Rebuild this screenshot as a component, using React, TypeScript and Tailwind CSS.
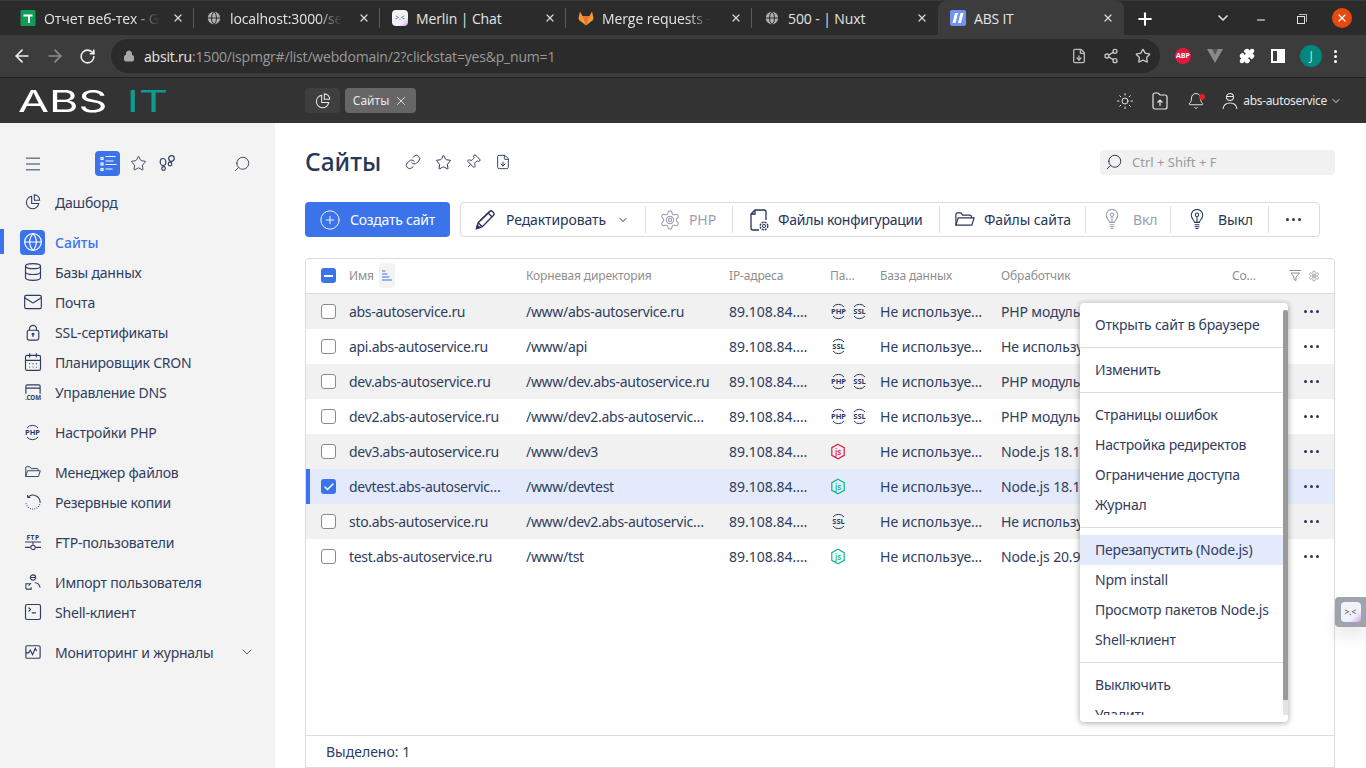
import type { ReactNode } from "react";
import {
  ArrowLeft,
  ArrowRight,
  RotateCw,
  Lock,
  Share2,
  Star,
  Puzzle,
  Plus,
  X,
  ChevronDown,
  Minus,
  Sun,
  Bell,
  Search,
  Menu,
  Globe,
  Database,
  Mail,
  CalendarDays,
  SquareTerminal,
  Link,
  Pin,
  FileDown,
  Check,
  CirclePlus,
} from "lucide-react";

const UI = "font-['Noto_Sans',sans-serif]";
const GEAR =
  "M12.22 2h-.44a2 2 0 0 0-2 2v.18a2 2 0 0 1-1 1.73l-.43.25a2 2 0 0 1-2 0l-.15-.08a2 2 0 0 0-2.73.73l-.22.38a2 2 0 0 0 .73 2.73l.15.1a2 2 0 0 1 1 1.72v.51a2 2 0 0 1-1 1.74l-.15.09a2 2 0 0 0-.73 2.73l.22.38a2 2 0 0 0 2.73.73l.15-.08a2 2 0 0 1 2 0l.43.25a2 2 0 0 1 1 1.73V20a2 2 0 0 0 2 2h.44a2 2 0 0 0 2-2v-.18a2 2 0 0 1 1-1.73l.43-.25a2 2 0 0 1 2 0l.15.08a2 2 0 0 0 2.73-.73l.22-.39a2 2 0 0 0-.73-2.73l-.15-.08a2 2 0 0 1-1-1.74v-.5a2 2 0 0 1 1-1.74l.15-.09a2 2 0 0 0 .73-2.73l-.22-.38a2 2 0 0 0-2.73-.73l-.15.08a2 2 0 0 1-2 0l-.43-.25a2 2 0 0 1-1-1.73V4a2 2 0 0 0-2-2z";

function Pie({ size = 16 }: { size?: number }) {
  return (
    <svg width={size} height={size} viewBox="0 0 18 18" fill="none" stroke="currentColor" strokeWidth="1.2" className="shrink-0">
      <path d="M7.500 2.600a7 7 0 1 0 8 8h-8z" />
      <path d="M10.500 1v6h6a6 6 0 0 0-6-6z" />
    </svg>
  );
}

function Gear({ size = 20, sw = 1.2 }: { size?: number; sw?: number }) {
  return (
    <svg width={size} height={size} viewBox="0 0 24 24" fill="none" stroke="currentColor" strokeWidth={sw} className="shrink-0">
      <path d={GEAR} />
      <circle cx="12" cy="12" r="4" />
      <circle cx="12" cy="12" r="1.800" />
    </svg>
  );
}

function Badge({ label, color = "#2a3a5e" }: { label: string; color?: string }) {
  return (
    <svg width="17" height="17" viewBox="0 0 17 17" fill="none" stroke={color} strokeWidth="1" className="shrink-0">
      <path d="M3 4a7 7 0 0 1 11 0" />
      <path d="M3 13a7 7 0 0 0 11 0" />
      <text x="8.500" y="11" textAnchor="middle" fontSize="7.500" fontWeight="700" fill={color} stroke="none" fontFamily="Noto Sans, sans-serif">
        {label}
      </text>
    </svg>
  );
}

function NodeBadge({ color }: { color: string }) {
  return (
    <svg width="16" height="17" viewBox="0 0 16 17" fill="none" stroke={color} strokeWidth="1.200">
      <path d="M8 1.200l6.200 3.500v7.600L8 15.800l-6.200-3.500V4.700z" />
      <text x="8" y="11.500" textAnchor="middle" fontSize="8" fontWeight="600" fill={color} stroke="none" fontFamily="Noto Sans, sans-serif">
        js
      </text>
    </svg>
  );
}

function MerlinIcon({ size = 16 }: { size?: number }) {
  return (
    <div
      className="flex items-center justify-center rounded-sm bg-gradient-to-br from-[#f4f3f8] via-[#f1eff8] via-70% to-[#cf9df2] text-[#444] leading-none"
      style={{ width: size, height: size, fontSize: size * 0.42 }}
    >
      &gt;.&lt;
    </div>
  );
}

const navIcon = "w-5 h-5 stroke-[1.4] shrink-0";

function SslLock() {
  return (
    <svg width="16" height="17" viewBox="0 0 18 19" fill="none" stroke="currentColor" strokeWidth="1.300" className="shrink-0">
      <rect x="2.500" y="7" width="13" height="11" rx="2" />
      <path d="M5 7V5.500a4 4 0 0 1 8 0V7" />
      <circle cx="9" cy="11.500" r="1" />
      <path d="M9 12.500v2" />
    </svg>
  );
}

function DnsIcon() {
  return (
    <svg width="16" height="17" viewBox="0 0 18 19" fill="none" stroke="currentColor" strokeWidth="1.300" className="shrink-0">
      <path d="M1 11V2.500A1.500 1.500 0 0 1 2.500 1h13A1.500 1.500 0 0 1 17 2.500V11M1 4.500h16" />
      <text x="9" y="18.500" textAnchor="middle" fontSize="7" fontWeight="700" fill="currentColor" stroke="none" fontFamily="Noto Sans, sans-serif">
        .COM
      </text>
    </svg>
  );
}

function BackupIcon() {
  return (
    <svg width="16" height="16" viewBox="0 0 18 18" fill="none" stroke="currentColor" strokeWidth="1.200" className="shrink-0">
      <path d="M3.500 3.500A8 8 0 0 1 17 9" />
      <path d="M17 9a8 8 0 0 1-16 0" strokeDasharray="1 1.500" />
      <path d="M3 1v3h3" />
    </svg>
  );
}

function FtpIcon() {
  return (
    <svg width="16" height="17" viewBox="0 0 18 19" fill="none" stroke="currentColor" strokeWidth="1.200" className="shrink-0">
      <text x="9" y="6.500" textAnchor="middle" fontSize="7.500" fontWeight="700" letterSpacing="0.500" fill="currentColor" stroke="none" fontFamily="Noto Sans, sans-serif">
        FTP
      </text>
      <path d="M0 9h18M0 15h6M12 15h6M9 9v3" />
      <circle cx="9" cy="15" r="2.500" />
    </svg>
  );
}

function ImportIcon() {
  return (
    <svg width="16" height="16" viewBox="0 0 18 18" fill="none" stroke="currentColor" strokeWidth="1.200" className="shrink-0">
      <circle cx="9" cy="4" r="3" />
      <path d="M6.500 4h5M11 9.500c3 .5 5.500 2.500 6 6" />
      <path d="M1 17v-6h5l-2 2M1 17h6v-2" />
    </svg>
  );
}

function MonitorIcon() {
  return (
    <svg width="16" height="16" viewBox="0 0 18 18" fill="none" stroke="currentColor" strokeWidth="1.300" className="shrink-0">
      <rect x="1" y="2" width="16" height="14" rx="1.500" />
      <path d="M1 10h3l2-3 2.500 5 3-7 1.500 3" />
    </svg>
  );
}

function OpenFolder({ width = 16 }: { width?: number }) {
  return (
    <svg width={width} viewBox="0 0 22 16" fill="none" stroke="currentColor" strokeWidth="1.300" className="shrink-0">
      <path d="M1 14.500V2.500A1.500 1.500 0 0 1 2.500 1h4l2 2.500h8A1.500 1.500 0 0 1 18 5v1.500" />
      <path d="M1 14.500l2.500-8H21l-2.500 8z" />
    </svg>
  );
}

function ConfigIcon() {
  return (
    <svg width="22" height="22" viewBox="0 0 22 22" fill="none" stroke="currentColor" strokeWidth="1.300" className="shrink-0">
      <path d="M11 21H5a2 2 0 0 1-2-2V5l4-4h9a2 2 0 0 1 2 2v8M3 5h4V1" />
      <circle cx="16" cy="17" r="1.600" strokeWidth="1" />
      <circle cx="16" cy="17" r="3.800" strokeDasharray="2 1" strokeWidth="1.400" />
    </svg>
  );
}

function PencilIcon() {
  return (
    <svg width="21" height="21" viewBox="0 0 20 20" fill="none" stroke="currentColor" strokeWidth="1.300" className="shrink-0">
      <path d="M1.500 18.500l1.500-5.500L14 2.300a1.800 1.800 0 0 1 2.500 0l1.200 1.200a1.800 1.800 0 0 1 0 2.500L7 16.800z" />
      <path d="M3 13l4 3.800M12.500 3.800l3.800 3.800M5 11l9.500-9" />
      <path d="M1.500 18.500l.8-3 2.200 2.200z" fill="currentColor" />
    </svg>
  );
}

function Bulb() {
  return (
    <svg width="16" height="21" viewBox="0 0 16 22" fill="none" stroke="currentColor" strokeWidth="1.100" className="shrink-0">
      <path d="M5.500 14c0-2-3.500-3.500-3.500-7.500a6 6 0 0 1 12 0c0 4-3.500 5.500-3.500 7.500z" />
      <circle cx="8" cy="6" r="1.800" />
      <path d="M8 8v6M5.500 16.500h5M5.500 18.500h5M6.500 20.500h3" />
    </svg>
  );
}

function Footsteps() {
  return (
    <svg width="17" height="17" viewBox="0 0 17 17" fill="none" stroke="currentColor" strokeWidth="1.200" className="shrink-0">
      <ellipse cx="4" cy="7" rx="2.800" ry="3.500" />
      <circle cx="4.500" cy="13.500" r="1.800" />
      <ellipse cx="12.500" cy="3.500" rx="2.800" ry="2.800" />
      <circle cx="11" cy="9" r="1.800" />
    </svg>
  );
}

function ListActive() {
  return (
    <svg width="18" height="18" viewBox="0 0 18 18" fill="none" stroke="white" strokeWidth="1.100">
      <rect x="2" y="2.500" width="2" height="2" />
      <rect x="2" y="8" width="2" height="2" />
      <rect x="2" y="13.500" width="2" height="2" />
      <path d="M6.500 1.500h10M6.500 6h8M6.500 9.500h11M6.500 14h7" />
    </svg>
  );
}

const TABS = [
  { title: "Отчет веб-тех - G", icon: "sheet", fade: true },
  { title: "localhost:3000/se", icon: "globe", fade: true },
  { title: "Merlin | Chat", icon: "merlin" },
  { title: "Merge requests -", icon: "gitlab", fade: true },
  { title: "500 - | Nuxt", icon: "globe" },
];

function TabIcon({ kind }: { kind: string }) {
  if (kind === "sheet")
    return (
      <svg width="16" height="16" viewBox="0 0 16 16">
        <rect x="0.500" width="15" height="16" rx="1.500" fill="#0f9d58" />
        <path d="M3.500 4.500h9v2h-2.500V13H8V6.500H3.500z" fill="white" />
      </svg>
    );
  if (kind === "globe") return <Globe className="w-4 h-4 text-[#2c2c2c] fill-[#aeb0b3] stroke-[1.5]" />;
  if (kind === "merlin") return <MerlinIcon />;
  return (
    <svg width="16" height="16" viewBox="0 0 16 16">
      <path d="M8 15.500L1 10 .500 8l1.500-6.500L4.500 6h7L14 1.500 15.500 8 15 10z" fill="#f09b36" />
      <path d="M8 15.500L4.500 6h7z" fill="#e8732c" />
    </svg>
  );
}

function BrowserChrome() {
  return (
    <div className="font-['Open_Sans',sans-serif]">
      <div className="h-[35px] bg-[#2b2b2b] border-t border-[#3a3a3a] flex items-end pl-2 relative">
        {TABS.map((t, i) => (
          <div key={i} className="w-[186px] h-[34px] flex items-center pl-3 pr-2 relative">
            <div className="shrink-0 w-4 h-4"><TabIcon kind={t.icon} /></div>
            <div className="ml-2 flex-1 whitespace-nowrap text-[14px] text-[#e4e4e4] tracking-[-0.1px]">
              <span className={`inline-block ${t.fade ? "[mask-image:linear-gradient(to_right,black_78%,transparent)]" : ""}`}>{t.title}</span>
            </div>
            <X className="w-3 h-3 text-[#d8d8d8] stroke-[2.5] ml-2 mr-0.5 shrink-0" />
            {i < 4 && <div className="absolute right-0 top-[7px] h-[20px] w-px bg-[#5a5a5a]" />}
          </div>
        ))}
        <div className="w-[186px] h-[34px] bg-[#3c3c3c] rounded-t-lg flex items-center pl-3 pr-2">
          <svg width="16" height="16" viewBox="0 0 16 16">
            <rect width="16" height="16" rx="2" fill="#6d94f5" />
            <path d="M5 3h3L5.500 13h-3zM10.500 3h3L11 13H8z" fill="white" />
          </svg>
          <div className="ml-2 flex-1 text-[14px] text-[#e8e8e8] tracking-[-0.2px]">ABS IT</div>
          <X className="w-3 h-3 text-[#d8d8d8] stroke-[2.5] mr-0.5" />
        </div>
        <Plus className="w-5 h-5 text-white stroke-[2.5] ml-[11px] mb-[6px]" />
        <div className="flex-1" />
        <ChevronDown className="w-4 h-4 text-[#e0e0e0] stroke-[2.5] mb-[9px] mr-[24px]" />
        <Minus className="w-3 h-3 text-white mb-[9px] mr-[30px]" />
        <div className="relative w-2 h-2 border border-[#e0e0e0] mb-[11px] mr-[27px]">
          <div className="absolute -top-[3px] -right-[3px] w-2 h-2 border-t border-r border-[#b8b8b8]" />
        </div>
        <div className="w-[20px] h-[20px] rounded-full bg-[#e8490f] text-white flex items-center justify-center mb-[7px] mr-[14px]">
          <X className="w-3 h-3 stroke-[2.5]" />
        </div>
      </div>
      <div className="h-[43px] bg-[#3c3c3c] border-b border-[#222] flex items-center pl-[12px] pr-[14px]">
        <ArrowLeft className="w-[20px] h-[20px] text-[#f0f0f0] stroke-[2]" />
        <ArrowRight className="w-[20px] h-[20px] text-[#8b8b8b] stroke-[2] ml-[13px]" />
        <RotateCw className="w-[17px] h-[17px] text-[#f0f0f0] stroke-[2.2] ml-[14px]" />
        <div className="ml-[15px] w-[1049px] h-[34px] rounded-full bg-[#2b2b2b] flex items-center pl-[12px] pr-[9px]">
          <Lock className="w-[12px] h-[12px] text-[#a8a8a8] fill-[#a8a8a8]" />
          <div className="ml-[9px] flex-1 text-[14px] tracking-[-0.19px] whitespace-nowrap pt-[1px]">
            <span className="text-[#e8e8e8]">absit.ru</span>
            <span className="text-[#9a9a9a]">:1500/ispmgr#/list/webdomain/2?clickstat=yes&amp;p_num=1</span>
          </div>
          <FileDown className="w-4 h-4 text-[#bbb]" />
          <Share2 className="w-4 h-4 text-[#c8c8c8] ml-[16px]" />
          <Star className="w-4 h-4 text-[#c8c8c8] ml-[16px]" />
        </div>
        <div className="ml-[15px] w-4 h-4 rounded-full bg-[#e6173e] text-white text-[7px] font-bold flex items-center justify-center">ABP</div>
        <svg width="16" height="16" viewBox="0 0 16 16" className="ml-[16px]"><path d="M0 1h16L8 15z" fill="#8a8a8a" /><path d="M5 1h6L8 7z" fill="#555" /></svg>
        <Puzzle className="w-4 h-4 text-white fill-white ml-[16px]" />
        <div className="ml-[16px] w-[14px] h-[14px] border-2 border-white bg-[#3c3c3c] flex justify-end"><div className="w-[6px] bg-white" /></div>
        <div className="ml-[15px] w-[22px] h-[22px] rounded-full bg-[#00897b] text-[#d8d8d8] text-[12px] flex items-center justify-center">J</div>
        <div className="ml-[12px] flex flex-col gap-[2px]">
          <div className="w-[3px] h-[3px] rounded-full bg-white" />
          <div className="w-[3px] h-[3px] rounded-full bg-white" />
          <div className="w-[3px] h-[3px] rounded-full bg-white" />
        </div>
      </div>
    </div>
  );
}

function AppHeader() {
  return (
    <div className={`h-[45px] bg-[#333333] flex items-center pl-[18px] pr-[24px] ${UI}`}>
      <div className="w-[287px] text-[30px] leading-none font-['Inter'] font-normal whitespace-nowrap scale-x-[1.5] origin-left">
        <span className="text-white">ABS</span>
        <span className="text-[#0d9c94] ml-[13px]">IT</span>
      </div>
      <div className="w-[35px] h-[25px] rounded bg-[#3f3f3f] flex items-center justify-center text-[#e6e6e6]"><Pie size={16} /></div>
      <div className="ml-[5px] h-[25px] w-[71px] rounded bg-[#666666] flex items-center justify-center gap-[5px] text-[12px] text-[#e8e8e8]">
        Сайты <X className="w-[14px] h-[14px] stroke-[1.5]" />
      </div>
      <div className="flex-1" />
      <Sun className="w-[18px] h-[18px] text-[#e6e6e6] stroke-[1.3]" />
      <svg width="16" height="18" viewBox="0 0 16 18" fill="none" stroke="#e6e6e6" strokeWidth="1.200" className="ml-[18px]">
        <path d="M1 3a2 2 0 0 1 2-2h3l2 2h5a2 2 0 0 1 2 2v10a2 2 0 0 1-2 2H3a2 2 0 0 1-2-2z" />
        <path d="M8 14V8M5.500 10.500L8 8l2.500 2.500" />
      </svg>
      <div className="ml-[19px] relative">
        <Bell className="w-[18px] h-[18px] text-[#e6e6e6] stroke-[1.3]" />
        <div className="absolute right-0 top-[2px] w-[6px] h-[6px] rounded-full bg-[#ea1c24]" />
      </div>
      <svg width="16" height="18" viewBox="0 0 16 18" fill="none" stroke="#e6e6e6" strokeWidth="1.100" className="ml-[17px]">
        <circle cx="8" cy="5" r="3.500" />
        <path d="M4.800 4.500h6.400M1 17c.5-3.500 3-6 7-6s6.500 2.500 7 6" />
      </svg>
      <div className="ml-[5px] text-[12px] text-[#e8e8e8] tracking-[-0.33px]">abs-autoservice</div>
      <ChevronDown className="w-3 h-3 text-[#e6e6e6] ml-[3px]" />
    </div>
  );
}

type NavItem = { label: string; icon: ReactNode; gap?: boolean; active?: boolean; chevron?: boolean };

const NAV: NavItem[] = [
  { label: "Дашборд", icon: <Pie /> },
  { label: "Сайты", icon: <Globe className={navIcon} />, gap: true, active: true },
  { label: "Базы данных", icon: <Database className={navIcon} /> },
  { label: "Почта", icon: <Mail className={navIcon} /> },
  { label: "SSL-сертификаты", icon: <SslLock /> },
  { label: "Планировщик CRON", icon: <CalendarDays className={navIcon} /> },
  { label: "Управление DNS", icon: <DnsIcon /> },
  { label: "Настройки PHP", icon: <Badge label="PHP" />, gap: true },
  { label: "Менеджер файлов", icon: <OpenFolder />, gap: true },
  { label: "Резервные копии", icon: <BackupIcon /> },
  { label: "FTP-пользователи", icon: <FtpIcon />, gap: true },
  { label: "Импорт пользователя", icon: <ImportIcon />, gap: true },
  { label: "Shell-клиент", icon: <SquareTerminal className={navIcon} /> },
  { label: "Мониторинг и журналы", icon: <MonitorIcon />, gap: true, chevron: true },
];

function Sidebar() {
  return (
    <div className="w-[275px] shrink-0 bg-[#f3f3f4] pt-[28px] text-[#2f3d60] text-[14px]">
      <div className="h-[25px] flex items-center pl-[25px] pr-[24px]">
        <Menu className="w-5 h-5 -ml-[2px] stroke-[1.2]" />
        <div className="ml-[52px] w-[25px] h-[25px] rounded bg-[#3b73ea] flex items-center justify-center"><ListActive /></div>
        <Star className="ml-[10px] w-[17px] h-[17px] stroke-[1.3]" />
        <div className="ml-[12px]"><Footsteps /></div>
        <div className="flex-1" />
        <Search className="w-[18px] h-[18px] stroke-[1.2] -scale-x-100" />
      </div>
      <div className="mt-[11px]">
        {NAV.map((n) => (
          <div key={n.label} className={`relative h-[30px] flex items-center pl-[25px] pr-[20px] ${n.gap ? "mt-[10px]" : ""}`}>
            {n.active && <div className="absolute left-0 top-[2px] w-1 h-[25px] bg-[#3b73ea]" />}
            {n.active ? (
              <div className="-ml-[5px] -mr-[5px] w-[25px] h-[25px] rounded bg-[#3b73ea] flex items-center justify-center text-white shrink-0">{n.icon}</div>
            ) : (
              <div className="w-[15px] h-[18px] flex items-center justify-center shrink-0">{n.icon}</div>
            )}
            <div className={`ml-[15px] flex-1 whitespace-nowrap ${n.active ? "text-[#3b73ea] font-medium" : "tracking-[-0.2px]"}`}>{n.label}</div>
            {n.chevron && <ChevronDown className="w-4 h-4 stroke-[1.2]" />}
          </div>
        ))}
      </div>
    </div>
  );
}

function ToolbarBtn({ icon, label, disabled, chevron, className = "" }: { icon: ReactNode; label?: string; disabled?: boolean; chevron?: boolean; className?: string }) {
  return (
    <div className={`h-[27px] flex items-center border-r border-[#dcdcdc] last:border-r-0 whitespace-nowrap ${disabled ? "text-[#9aa1b2]" : "text-[#27365a]"} ${className}`}>
      {icon}
      {label && <span>{label}</span>}
      {chevron && <ChevronDown className="w-3 h-3 ml-[1px]" />}
    </div>
  );
}

type Row = { name: string; root: string; badges: ReactNode; handler: string; selected?: boolean };

const php = <Badge label="PHP" />;
const ssl = <Badge label="SSL" />;

const ROWS: Row[] = [
  { name: "abs-autoservice.ru", root: "/www/abs-autoservice.ru", badges: <>{php}{ssl}</>, handler: "PHP модуль" },
  { name: "api.abs-autoservice.ru", root: "/www/api", badges: ssl, handler: "Не используется" },
  { name: "dev.abs-autoservice.ru", root: "/www/dev.abs-autoservice.ru", badges: <>{php}{ssl}</>, handler: "PHP модуль" },
  { name: "dev2.abs-autoservice.ru", root: "/www/dev2.abs-autoservice.ru", badges: <>{php}{ssl}</>, handler: "PHP модуль" },
  { name: "dev3.abs-autoservice.ru", root: "/www/dev3", badges: <NodeBadge color="#e11d3c" />, handler: "Node.js 18.16" },
  { name: "devtest.abs-autoservice.ru", root: "/www/devtest", badges: <NodeBadge color="#10b981" />, handler: "Node.js 18.16", selected: true },
  { name: "sto.abs-autoservice.ru", root: "/www/dev2.abs-autoservice.ru", badges: ssl, handler: "Не используется" },
  { name: "test.abs-autoservice.ru", root: "/www/tst", badges: <NodeBadge color="#10b981" />, handler: "Node.js 20.9" },
];

function Dots({ className = "" }: { className?: string }) {
  return (
    <div className={`flex gap-[3px] ${className}`}>
      <div className="w-[3px] h-[3px] rounded-full bg-current" />
      <div className="w-[3px] h-[3px] rounded-full bg-current" />
      <div className="w-[3px] h-[3px] rounded-full bg-current" />
    </div>
  );
}

function SiteTable() {
  return (
    <div className="mt-[21px] flex-1 border border-[#dcdcdc] rounded-t-[4px] flex flex-col text-[14px] text-[#2f3d60]">
      <div className="h-[35px] shrink-0 flex items-center border-b border-[#dcdcdc] text-[12px] text-[#8e8e8e] tracking-[-0.15px] pb-[1px]">
        <div className="w-[43px] pl-[15px]">
          <div className="w-[15px] h-[15px] rounded-[3px] bg-[#3b73ea] flex items-center justify-center"><div className="w-[9px] h-[2px] bg-white" /></div>
        </div>
        <div className="w-[177px] flex items-center">
          Имя
          <div className="ml-[5px] w-4 h-[25px] rounded bg-[#f3f3f3] flex items-center justify-center text-[#3b73ea]">
            <svg width="10" height="11" viewBox="0 0 10 11" fill="none" stroke="currentColor"><path d="M0 1h3.500M0 4h5.500M0 7h7.500M0 10h10" /></svg>
          </div>
        </div>
        <div className="w-[203px]">Корневая директория</div>
        <div className="w-[101px]">IP-адреса</div>
        <div className="w-[50px]">Па…</div>
        <div className="w-[121px]">База данных</div>
        <div className="w-[231px]">Обработчик</div>
        <div className="w-[57px]">Со…</div>
        <svg width="12" height="11" viewBox="0 0 12 11" fill="none" stroke="currentColor" strokeWidth="1"><path d="M0 .5h12M2 3h8.500L7 7v3.500L5 9.500V7L2 3z" /></svg>
        <div className="ml-[7px]"><Gear size={12} sw={1.5} /></div>
      </div>
      {ROWS.map((r, i) => (
        <div
          key={r.name}
          className={`relative h-[35px] shrink-0 flex items-center whitespace-nowrap ${r.selected ? "bg-[#e3eafc]" : i % 2 === 0 ? "bg-[#f1f1f1]" : "bg-white"}`}
        >
          {r.selected && <div className="absolute left-0 top-0 bottom-0 w-[4px] bg-[#3b73ea]" />}
          <div className="w-[43px] pl-[15px]">
            {r.selected ? (
              <div className="w-[15px] h-[15px] rounded-[3px] bg-[#3b73ea] flex items-center justify-center"><Check className="w-3 h-3 text-white stroke-[3]" /></div>
            ) : (
              <div className="w-[15px] h-[15px] rounded-[3px] border border-[#8a8a8a] bg-white" />
            )}
          </div>
          <div className="w-[177px] pr-[18px] truncate tracking-[-0.3px]">{r.name}</div>
          <div className="w-[203px] pr-[18px] truncate tracking-[-0.3px]">{r.root}</div>
          <div className="w-[101px] pr-[21px] truncate">89.108.84.125</div>
          <div className="w-[50px] flex gap-[4px]">{r.badges}</div>
          <div className="w-[121px] pr-[17px] truncate">Не используется</div>
          <div className="w-[231px] truncate tracking-[-0.15px]">{r.handler}</div>
          <div className="flex-1" />
          <Dots className="mr-[15px] text-[#27365a]" />
        </div>
      ))}
      <div className="flex-1" />
      <div className="h-[32px] shrink-0 border-t border-[#dcdcdc] flex items-center pl-[20px]">Выделено: 1</div>
    </div>
  );
}

const MENU: (string | null)[] = [
  "Открыть сайт в браузере",
  null,
  "Изменить",
  null,
  "Страницы ошибок",
  "Настройка редиректов",
  "Ограничение доступа",
  "Журнал",
  null,
  "Перезапустить (Node.js)",
  "Npm install",
  "Просмотр пакетов Node.js",
  "Shell-клиент",
  null,
  "Выключить",
  "Удалить",
];

function RowMenu() {
  return (
    <div className="absolute left-[1080px] top-[303px] w-[208px] h-[419px] bg-white rounded-[4px] shadow-[0_1px_6px_rgba(0,0,0,0.35)] text-[14px] text-[#2f3d60] overflow-hidden tracking-[-0.2px]">
      <div className="h-[405px] mt-[7px] overflow-hidden pr-[5px]">
        {MENU.map((m, i) =>
          m === null ? (
            <div key={i} className="h-[15px] flex items-center"><div className="w-full h-px bg-[#dcdcdc]" /></div>
          ) : (
            <div key={i} className={`h-[30px] flex items-center pl-[15px] pb-[2px] whitespace-nowrap ${m.startsWith("Перезапустить") ? "bg-[#e3eafc]" : ""}`}>{m}</div>
          ),
        )}
      </div>
      <div className="absolute right-0 top-[7px] bottom-[7px] w-[5px] bg-[#e4e4e4]">
        <div className="h-[390px] bg-[#9a9a9a] rounded-t-full" />
      </div>
    </div>
  );
}

export default function App() {
  return (
    <div className={`relative w-[1366px] h-[768px] overflow-hidden bg-white ${UI}`}>
      <BrowserChrome />
      <AppHeader />
      <div className="flex h-[645px]">
        <Sidebar />
        <div className="flex-1 flex flex-col pl-[30px] pr-[31px] pt-[21px] min-w-0">
          <div className="h-[36px] shrink-0 flex items-center text-[#27365a]">
            <h1 className="text-[24.5px] font-medium text-[#27365a]">Сайты</h1>
            <Link className="ml-[24px] w-4 h-4 stroke-[1.4]" />
            <Star className="ml-[14px] w-[17px] h-[17px] stroke-[1.4]" />
            <Pin className="ml-[13px] w-4 h-4 stroke-[1.4] rotate-45" />
            <FileDown className="ml-[14px] w-4 h-4 stroke-[1.4]" />
            <div className="flex-1" />
            <div className="w-[235px] h-[25px] rounded bg-[#f1f1f1] flex items-center pl-[5px] text-[13px] text-[#9a9a9a]">
              <Search className="w-[18px] h-[18px] stroke-[1.3] -scale-x-100 text-[#27365a]" />
              <span className="ml-[9px] pt-[1px]">Ctrl + Shift + F</span>
            </div>
          </div>
          <div className="mt-[22px] h-[35px] shrink-0 flex text-[14px]">
            <div className="w-[145px] rounded bg-[#3b73ea] text-white flex items-center pl-[14px] gap-[9px] tracking-[-0.25px]">
              <CirclePlus className="w-[22px] h-[22px] stroke-[1]" />
              Создать сайт
            </div>
            <div className="ml-[10px] w-[860px] border border-[#dcdcdc] rounded flex items-center tracking-[-0.1px]">
              <ToolbarBtn className="w-[185px] pl-[14px] gap-[10px]" icon={<PencilIcon />} label="Редактировать" chevron />
              <ToolbarBtn className="w-[87px] pl-[13px] gap-[8px]" icon={<Gear size={22} />} label="PHP" disabled />
              <ToolbarBtn className="w-[207px] pl-[15px] gap-[8px] tracking-[-0.25px]" icon={<ConfigIcon />} label="Файлы конфигурации" />
              <ToolbarBtn className="w-[146px] pl-[15px] gap-[9px]" icon={<OpenFolder width={20} />} label="Файлы сайта" />
              <ToolbarBtn className="w-[85px] pl-[18px] gap-[13px]" icon={<Bulb />} label="Вкл" disabled />
              <ToolbarBtn className="w-[98px] pl-[18px] gap-[13px]" icon={<Bulb />} label="Выкл" />
              <ToolbarBtn className="flex-1 pl-[17px]" icon={<Dots />} />
            </div>
          </div>
          <SiteTable />
        </div>
      </div>
      <RowMenu />
      <div className="absolute right-0 top-[597px] w-[31px] h-[30px] rounded-l bg-[#9ea3b0] flex items-center justify-center shadow-[0_10px_14px_rgba(0,0,0,0.08)]">
        <MerlinIcon size={20} />
      </div>
    </div>
  );
}
